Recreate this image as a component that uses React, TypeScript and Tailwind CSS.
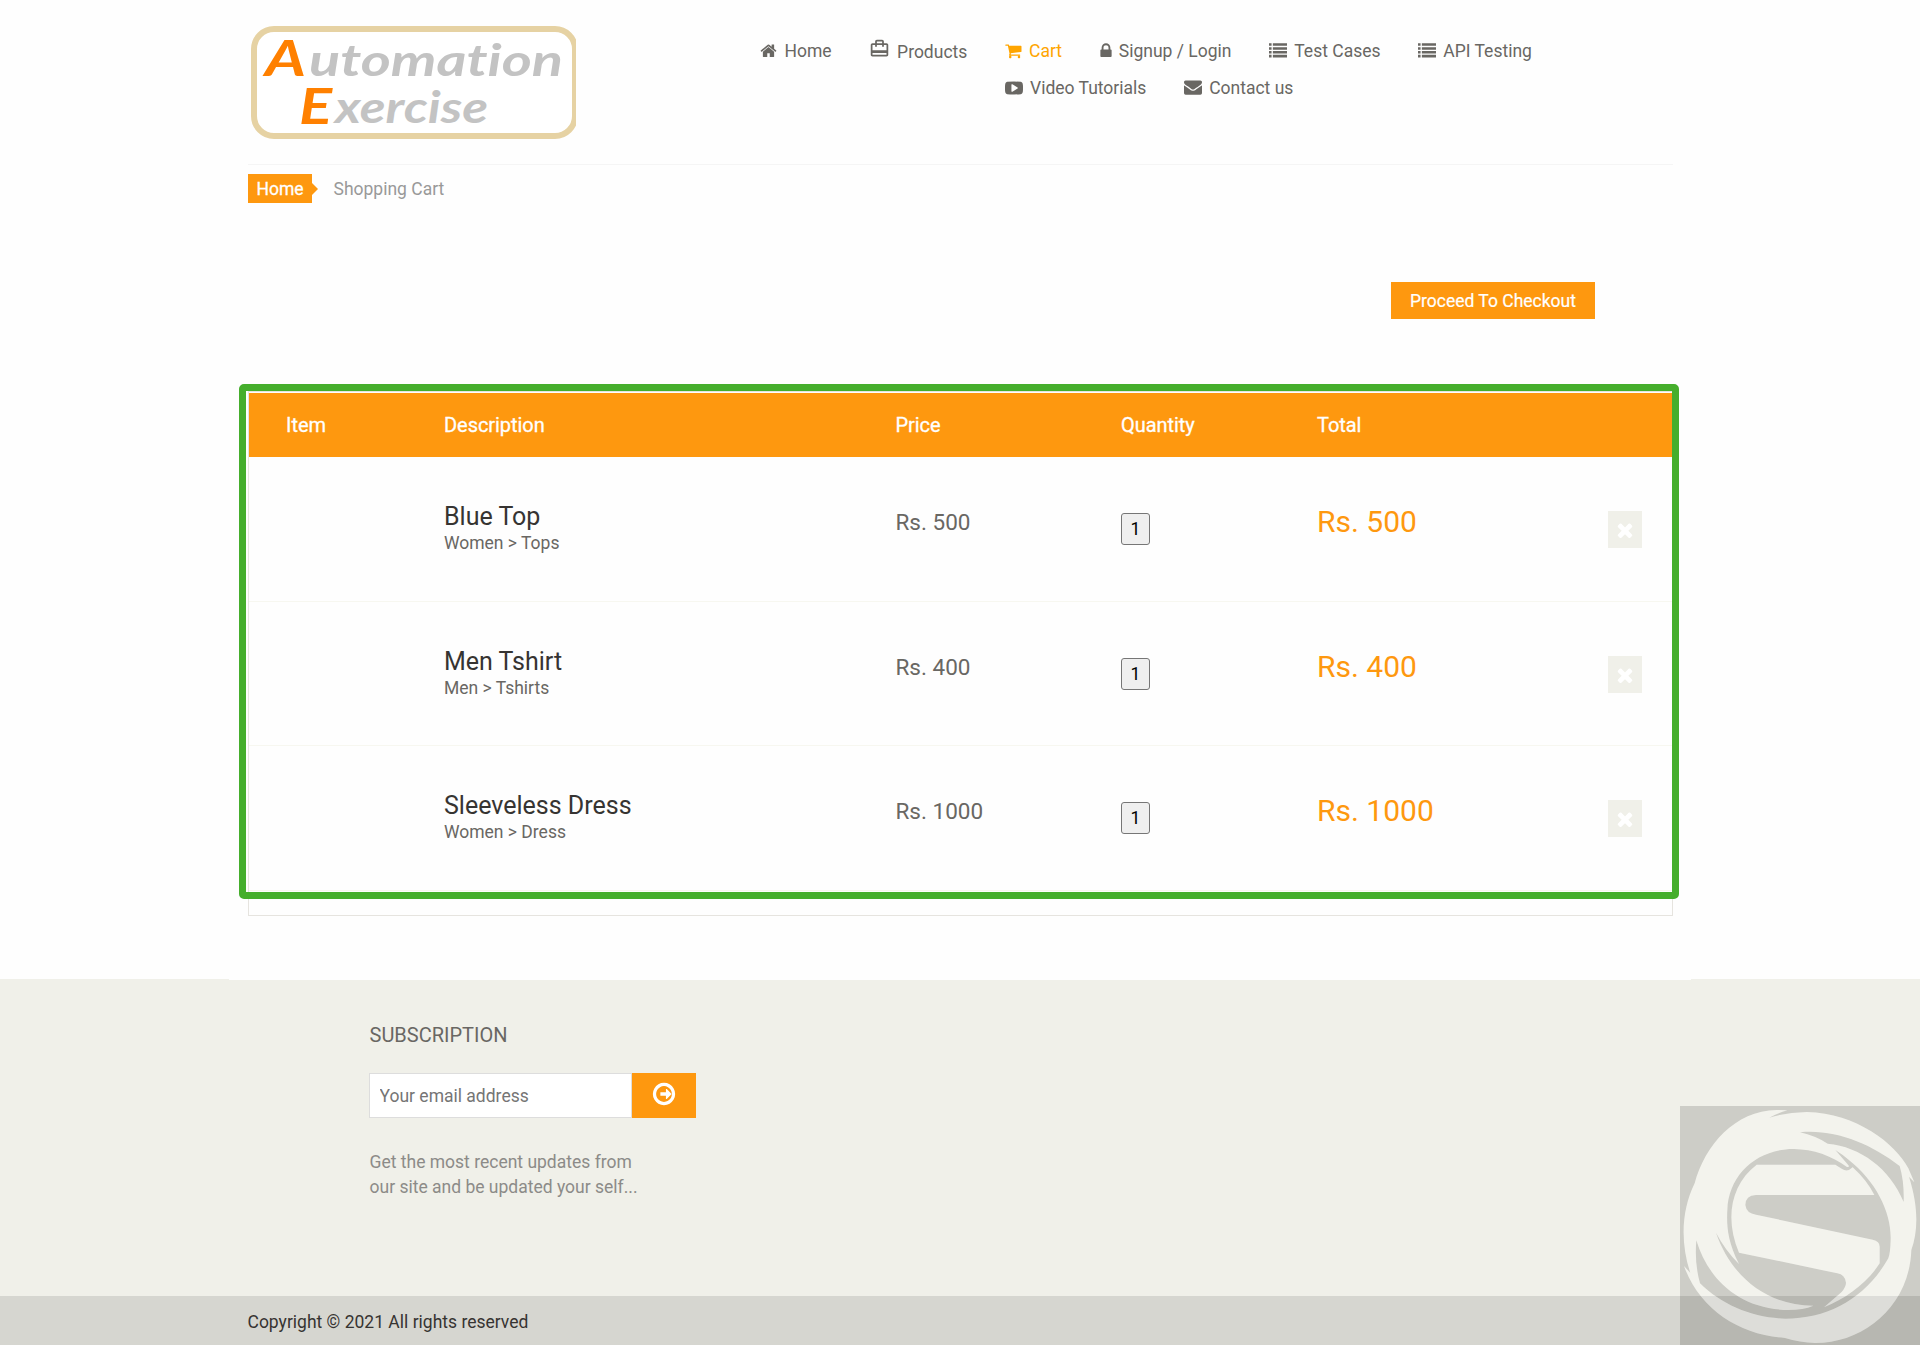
import React from "react";

const ICONS = {
  home: "M1472 992v480q0 26-19 45t-45 19h-384v-384h-256v384h-384q-26 0-45-19t-19-45v-480q0-1 .5-3t.5-3l575-474 575 474q1 2 1 6zm223-69l-62 74q-8 9-21 11h-3q-13 0-21-7l-692-577-692 577q-12 8-24 7-13-2-21-11l-62-74q-8-10-7-23.5t11-21.5l719-599q32-26 76-26t76 26l244 204v-195q0-14 9-23t23-9h192q14 0 23 9t9 23v408l219 182q10 8 11 21.5t-7 23.5z",
  cart: "M704 1536q0 52-38 90t-90 38-90-38-38-90 38-90 90-38 90 38 38 90zm896 0q0 52-38 90t-90 38-90-38-38-90 38-90 90-38 90 38 38 90zm128-1088v512q0 24-16.5 42.5t-40.5 21.5l-1044 122q13 60 13 70 0 16-24 64h920q26 0 45 19t19 45-19 45-45 19h-1024q-26 0-45-19t-19-45q0-11 8-31.5t16-36 21.5-40 15.5-29.5l-177-823h-204q-26 0-45-19t-19-45 19-45 45-19h256q16 0 28.5 6.5t19.5 15.5 13 24.5 8 26 5.5 29.5 4.5 26h1201q26 0 45 19t19 45z",
  lock: "M640 768h512v-192q0-106-75-181t-181-75-181 75-75 181v192zm832 96v576q0 40-28 68t-68 28h-960q-40 0-68-28t-28-68v-576q0-40 28-68t68-28h32v-192q0-184 132-316t316-132 316 132 132 316v192h32q40 0 68 28t28 68z",
  list: "M0 128h256v256H0zM384 128h1408v256H384zM0 512h256v256H0zM384 512h1408v256H384zM0 896h256v256H0zM384 896h1408v256H384zM0 1280h256v256H0zM384 1280h1408v256H384z",
  video: "M1280 896q0-37-30-54l-512-320q-31-20-65-2-33 18-33 56v640q0 38 33 56 16 8 31 8 20 0 34-10l512-320q30-17 30-54zM1792 896q0 96-1 150t-8.500 136.500-22.500 147.500q-16 73-69 123t-124 58q-222 25-671 25t-671-25q-71-8-124.500-58t-69.500-123q-14-65-21.500-147.500t-8.500-136.500-1-150 1-150 8.500-136.500 22.500-147.500q16-73 69-123t124-58q222-25 671-25t671 25q71 8 124.500 58t69.500 123q14 65 21.500 147.500t8.500 136.500 1 150z",
  mail: "M1792 710v794q0 66-47 113t-113 47h-1472q-66 0-113-47t-47-113v-794q44 49 101 87 362 246 497 345 57 42 92.500 65.500t94.500 48 110 24.500h2q51 0 110-24.500t94.500-48 92.500-65.500q170-123 498-345 57-39 100-87zm0-294q0 79-49 151t-122 123q-376 261-468 325-10 7-42.500 31t-54 38.500-52 32.500-57.500 27-50 9h-2q-23 0-50-9t-57.500-27-52-32.500-54-38.500-42.500-31q-91-64-262-182.500t-205-142.500q-62-42-117-115.500t-55-136.500q0-78 41.500-130t118.500-52h1472q65 0 112.500 47t47.500 113z",
  times: "M1490 1322q0 40-28 68l-136 136q-28 28-68 28t-68-28l-294-294-294 294q-28 28-68 28t-68-28l-136-136q-28-28-28-68t28-68l294-294-294-294q-28-28-28-68t28-68l136-136q28-28 68-28t68 28l294 294 294-294q28-28 68-28t68 28l136 136q28 28 28 68t-28 68l-294 294 294 294q28 28 28 68z",
  arrow: "M1413 896q0 14-9 23l-320 320q-9 9-23 9-13 0-22.500-9.500t-9.500-22.500v-192h-352q-13 0-22.500-9.500t-9.500-22.500v-192q0-13 9.500-22.500t22.500-9.500h352v-192q0-14 9-23t23-9q12 0 24 10l319 319q9 9 9 23zm27 0q0-148-73-273t-198-198-273-73-273 73-198 198-73 273 73 273 198 198 273 73 273-73 198-198 73-273zm224 0q0 209-103 385.500t-279.500 279.500-385.500 103-385.500-103-279.500-279.500-103-385.500 103-385.500 279.500-279.500 385.500-103 385.500 103 279.500 279.500 103 385.500z",
};

type IconName = keyof typeof ICONS;

function Icon({ name, className = "", box = "0 0 1792 1792" }: { name: IconName; className?: string; box?: string }) {
  return (
    <svg viewBox={box} className={`shrink-0 fill-current ${className}`} aria-hidden="true">
      <path fillRule="evenodd" d={ICONS[name]} />
    </svg>
  );
}

function Logo() {
  return (
    <svg viewBox="0 0 325 113" className="mt-[26px] ml-[3px] h-[113px] w-[325px]" role="img" aria-label="Automation Exercise">
      <rect x="3" y="3" width="321" height="107" rx="20" fill="#fff" stroke="#e6d2a3" strokeWidth="6" />
      <g fontFamily="Lato, sans-serif" fontStyle="italic" fontWeight="700" fill="#c3c3c3" className="[font-variant-ligatures:none]">
        <text x="14" y="50" fontSize="50" fill="#ff8000" textLength="41" lengthAdjust="spacingAndGlyphs">A</text>
        <text x="58" y="50" fontSize="43" textLength="254" lengthAdjust="spacingAndGlyphs">utomation</text>
        <text x="48" y="98" fontSize="50" fill="#ff8000" textLength="33" lengthAdjust="spacingAndGlyphs">E</text>
        <text x="84" y="97" fontSize="43" textLength="153" lengthAdjust="spacingAndGlyphs">xercise</text>
      </g>
    </svg>
  );
}

function NavItem({ icon, label, iconClass, box, active }: { icon: IconName; label: string; iconClass: string; box?: string; active?: boolean }) {
  return (
    <li className={`flex h-[37px] items-center ${active ? "text-[#ffa500]" : ""}`}>
      <Icon name={icon} box={box} className={iconClass} />
      <span className="pt-[2px] whitespace-nowrap">{label}</span>
    </li>
  );
}

function Header() {
  return (
    <header className="flex h-[165px] justify-between border-b border-[#f5f5f5]">
      <Logo />
      <nav className="mt-[32px] mr-[115px] flex w-[798px]">
        <ul className="flex w-[245px]">
          <NavItem icon="home" label="Home" iconClass="mr-[7.5px] h-[17.5px] w-[17px]" box="40 0 1712 1792" />
          <li className="ml-[37px] flex h-[38px] items-center">
            <svg viewBox="0 0 24 24" className="mr-[7.5px] mb-[5px] h-[21px] w-[21px] fill-current" aria-hidden="true">
              <path d="M20 6h-3V4c0-1.110-.89-2-2-2H9c-1.110 0-2 .89-2 2v2H4c-1.110 0-2 .89-2 2v11c0 1.110.89 2 2 2h16c1.110 0 2-.89 2-2V8c0-1.110-.89-2-2-2zM9 4h6v2H9V4zm11 15H4v-2h16v2zm0-5H4V8h3v2h2V8h6v2h2V8h3v6z" />
            </svg>
            <span className="pt-[2px]">Products</span>
          </li>
        </ul>
        <ul className="flex flex-1 flex-wrap content-start gap-x-[37.5px]">
          <NavItem icon="cart" label="Cart" iconClass="mr-[7px] h-[17.5px] w-[17px]" box="40 0 1740 1792" active />
          <NavItem icon="lock" label="Signup / Login" iconClass="mr-[7.3px] h-[17.5px] w-[12px]" box="290 0 1212 1792" />
          <NavItem icon="list" label="Test Cases" iconClass="mr-[7.3px] h-[18px] w-[18px]" />
          <NavItem icon="list" label="API Testing" iconClass="mr-[7.3px] h-[18px] w-[18px]" />
          <NavItem icon="video" label="Video Tutorials" iconClass="mr-[7px] h-[18px] w-[18px]" />
          <NavItem icon="mail" label="Contact us" iconClass="mr-[7.3px] mb-px h-[18px] w-[18px]" />
        </ul>
      </nav>
    </header>
  );
}

const COLS = "grid grid-cols-[195px_451.5px_225.5px_196px_291px_66px]";

const ROWS = [
  { name: "Blue Top", category: "Women > Tops", price: "Rs. 500" },
  { name: "Men Tshirt", category: "Men > Tshirts", price: "Rs. 400" },
  { name: "Sleeveless Dress", category: "Women > Dress", price: "Rs. 1000" },
];

function CartTable() {
  return (
    <section className="relative mt-[72px] h-[525px] w-[1425px] border border-[#e6e4df]">
      <div className={`${COLS} mt-px h-[64px] items-center bg-[#fe980f] text-[20px] tracking-[-0.05px] text-white [-webkit-text-stroke:0.3px_white]`}>
        <span className="pl-[37px]">Item</span>
        <span>Description</span>
        <span>Price</span>
        <span>Quantity</span>
        <span>Total</span>
      </div>
      {ROWS.map((row) => (
        <div key={row.name} className={`${COLS} h-[144.7px] border-b border-[#f7f7f0] last-of-type:border-0`}>
          <span />
          <div className="pt-[43px]">
            <h4 className="text-[25px] leading-[34px] text-[#363432]">{row.name}</h4>
            <p className="leading-[18px]">{row.category}</p>
          </div>
          <p className="pt-[48px] text-[22.5px] leading-[34px]">{row.price}</p>
          <div className="pt-[56px]">
            <button className="h-[32px] w-[29px] rounded-[3px] border border-[#767676] bg-[#efefef] text-black">1</button>
          </div>
          <p className="pt-[45px] text-[30px] leading-[40px] text-[#fe980f]">{row.price}</p>
          <div className="pt-[54px]">
            <button className="flex h-[37px] w-[34px] items-center justify-center bg-[#f0f0e9] text-white" aria-label="Remove">
              <Icon name="times" className="mt-px h-[22px] w-[22px]" />
            </button>
          </div>
        </div>
      ))}
      <div className="pointer-events-none absolute -top-[8px] -left-[10px] h-[515px] w-[1440px] rounded-[5px] border-[7px] border-[#45ae2c]" />
    </section>
  );
}

const RING =
  "M104 280C135 165 225 62 350 60L382 61Q350 70 328 83Q380 67 440 66C590 70 705 160 745 235L763 277L747 260C775 350 775 420 754 480C748 650 610 760 465 759Q420 758 375 744C240 735 120 660 72 528L91 549C60 455 65 360 104 280Z" +
  "M420 127Q465 137 503 161C600 170 690 235 731 336Q733 275 719 228C630 160 525 117 420 127Z" +
  "M526 180Q550 195 564 208C650 275 695 370 692 450Q691 490 685 505C620 620 510 686 376 686C280 684 185 645 120 580Q103 520 109 451C145 570 240 658 385 660Q430 660 460 647C310 646 210 550 168 428Q195 480 237 522C200 450 200 400 202 360C205 255 290 176 402 177C460 178 515 197 561 231Q571 232 564 224Z" +
  "M290 224H526L545 236Q562 248 578 232Q620 270 643 315H288Q256 317 256 345Q259 370 288 374L638 449Q659 453 659 470V520C625 575 560 625 492 652L545 606Q558 590 558 578Q555 554 532 550L237 488C195 390 210 285 290 224Z";

function Watermark() {
  return (
    <svg viewBox="60 48 720 717" preserveAspectRatio="none" className="absolute right-0 bottom-0 h-[239px] w-[240px]" aria-hidden="true">
      <path fill="#000" fillOpacity="0.145" fillRule="evenodd" d={"M60 48H780V765H60Z" + RING} />
      <path fill="#fff" fillOpacity="0.19" fillRule="evenodd" d={RING} />
    </svg>
  );
}

export default function App() {
  return (
    <div className="relative h-[1345px] w-[1920px] overflow-hidden bg-[#fefefe] font-[Roboto,sans-serif] text-[17.5px] text-[#696763]">
      <div className="ml-[248px] h-[979px] w-[1425px]">
        <Header />
        <div className="mt-[9px] flex h-[29px] items-center">
          <span className="flex h-[29px] w-[64px] items-center justify-center bg-[#fe980f] pt-[2px] text-white [-webkit-text-stroke:0.3px_white]">Home</span>
          <span className="h-0 w-0 border-y-[6px] border-l-[6px] border-y-transparent border-l-[#fe980f]" />
          <span className="ml-[15.5px] pt-[2px] text-[#999]">Shopping Cart</span>
        </div>
        <div className="mt-[79px] flex justify-end pr-[78px]">
          <button className="h-[37px] w-[204px] bg-[#fe980f] pt-[2px] text-white [-webkit-text-stroke:0.2px_white]">Proceed To Checkout</button>
        </div>
        <CartTable />
      </div>
      <footer className="h-[366px] bg-[#f0f0e9]">
        <div className="mx-auto h-px w-[1462px] bg-[#fefefe]" />
        <div className="h-[316px] pt-[42px] pl-[369px]">
          <h2 className="pl-[0.5px] text-[20px] leading-[26px]">SUBSCRIPTION</h2>
          <form className="mt-[25px] flex h-[45px]">
            <input
              className="h-[45px] w-[263px] border border-[#dddddd] bg-white px-[9.5px] placeholder:text-[#757575]"
              placeholder="Your email address"
            />
            <button type="button" className="flex w-[64px] items-center justify-center bg-[#fe980f] text-white" aria-label="Subscribe">
              <Icon name="arrow" className="mb-[3px] h-[26px] w-[26px]" />
            </button>
          </form>
          <p className="mt-[32px] pl-[0.5px] text-[17.5px] leading-[25px] text-[#8c8b88]">
            Get the most recent updates from
            <br />
            our site and be updated your self...
          </p>
        </div>
        <div className="flex h-[49px] items-center bg-[#d6d6d0] pt-[3px] pl-[247.5px] text-[#363432]">Copyright © 2021 All rights reserved</div>
      </footer>
      <Watermark />
    </div>
  );
}
